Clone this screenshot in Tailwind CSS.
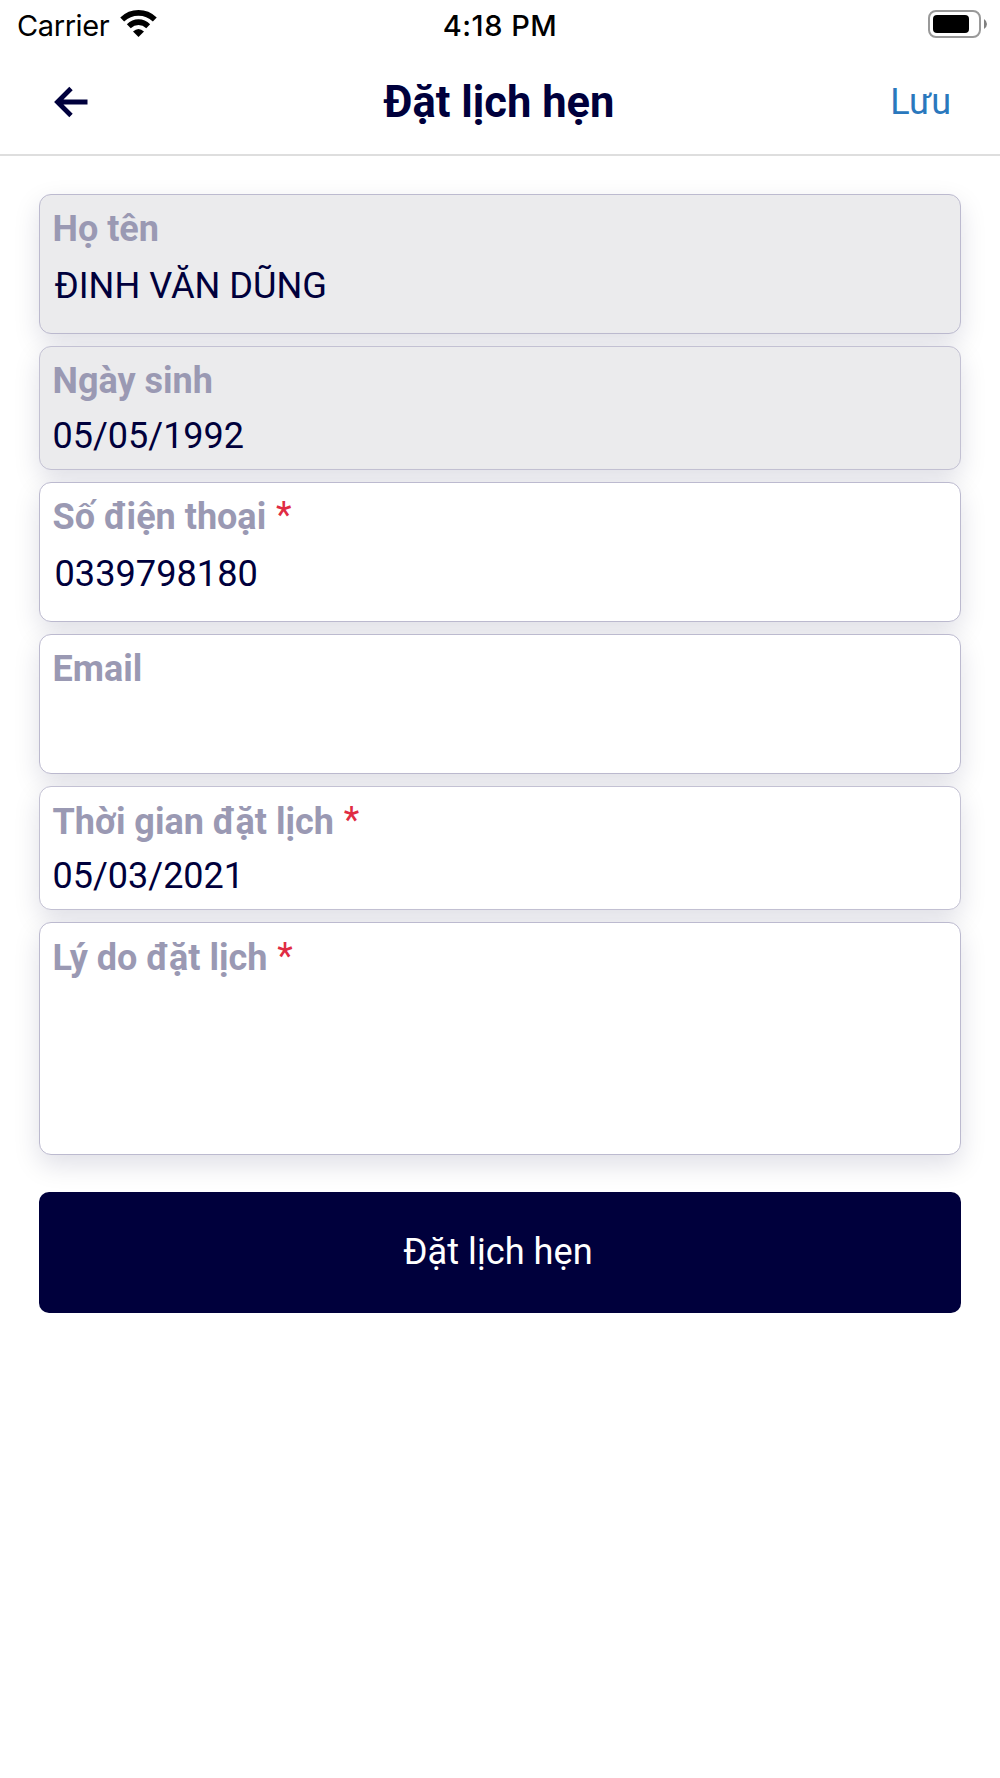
<!DOCTYPE html>
<html lang="vi">
<head>
    <meta charset="UTF-8">
    <meta name="viewport" content="width=device-width, initial-scale=1.0">
    <title>Đặt lịch hẹn</title>
    <script src="https://cdn.jsdelivr.net/npm/@tailwindcss/browser@4"></script>
</head>
<body class="bg-white min-h-screen font-[Roboto,sans-serif] text-[#00003c]">
    <!-- Status bar -->
    <div class="grid grid-cols-[1fr_auto_1fr] items-center h-[50px] pl-[17px] pr-[13px] font-[Inter,sans-serif] text-[29px] leading-none text-black">
        <div class="flex items-center gap-[9px]">
            <span class="w-[94px] tracking-[-0.4px] whitespace-nowrap">Carrier</span>
            <svg class="w-[37px] h-[28px] -mt-[2px]" viewBox="0 0 37 28" fill="none" stroke="#000">
                <path d="M2.200 9.500C11.500 .6 25.500 .6 34.800 9.500" stroke-width="5.600"/>
                <path d="M8.800 16.200C14.500 10.800 22.500 10.800 28.200 16.200" stroke-width="5.600"/>
                <path d="M13 21.400Q18.500 16.400 24 21.400L18.500 27Z" fill="#000" stroke="none"/>
            </svg>
        </div>
        <div class="pr-[4px] text-center font-medium tracking-[0.500px] whitespace-nowrap">4:18 PM</div>
        <div class="flex justify-end">
            <svg class="w-[59px] h-[28px] -mt-[2px]" viewBox="0 0 59 28">
                <rect x="1" y="1" width="51" height="26" rx="7" fill="none" stroke="#999" stroke-width="2"/>
                <rect x="5" y="5" width="36" height="18" rx="4" fill="#000"/>
                <path d="M56 9Q59 11 59 14T56 19Z" fill="#808080"/>
            </svg>
        </div>
    </div>

    <!-- Header -->
    <header class="grid grid-cols-[1fr_auto_1fr] items-center h-[106px] pl-[54px] pr-[49px] border-b-2 border-[#dedede]">
        <a href="#" aria-label="Quay lại">
            <svg class="w-[34px] h-[32px]" viewBox="0 0 34 32" fill="none" stroke="#00003c" stroke-width="4.800">
                <path d="M33.500 16H4M17 2.500L3.500 16L17 29.500"/>
            </svg>
        </a>
        <h1 class="pt-[2px] pr-[7px] text-[43.500px] leading-none font-bold">Đặt lịch hẹn</h1>
        <a href="#" class="text-right text-[36px] leading-none text-[#2a78bd]">Lưu</a>
    </header>

    <!-- Form -->
    <main class="px-[39px] pt-[37.500px] text-[36px]">
        <form class="flex flex-col gap-3">
            <div class="h-[140px] rounded-xl border border-[#bcbacf] bg-[#ebebed] px-[12.500px] pt-[13px] shadow-[0_10px_27px_rgba(0,0,60,0.13)]">
                <div class="font-bold leading-[42px] text-[#9a99b3]">Họ tên</div>
                <div class="pl-[2px] pt-[15px] text-[36.200px] leading-[42px]">ĐINH VĂN DŨNG</div>
            </div>
            <div class="h-[124px] rounded-xl border border-[#c3c1d3] bg-[#ebebed] px-[12.500px] pt-[13.500px] shadow-[0_10px_27px_rgba(0,0,60,0.13)]">
                <div class="font-bold leading-[42px] text-[#9a99b3]">Ngày sinh</div>
                <div class="pt-[12.500px] leading-[42px]">05/05/1992</div>
            </div>
            <div class="h-[140px] rounded-xl border border-[#bcbacf] bg-white px-[12.500px] pt-[13.500px] shadow-[0_10px_27px_rgba(0,0,60,0.13)]">
                <div class="font-bold leading-[42px] text-[#9a99b3]">Số điện thoại <span class="pl-px align-[2px] font-normal leading-none text-[#e02c43]">*</span></div>
                <div class="pl-[2px] pt-[14.500px] text-[36.200px] leading-[42px]">0339798180</div>
            </div>
            <div class="h-[140px] rounded-xl border border-[#bcbacf] bg-white px-[12.500px] pt-[13.500px] shadow-[0_10px_27px_rgba(0,0,60,0.13)]">
                <div class="font-bold leading-[42px] text-[#9a99b3]">Email</div>
            </div>
            <div class="h-[124px] rounded-xl border border-[#c3c1d3] bg-white px-[12.500px] pt-[14px] shadow-[0_10px_27px_rgba(0,0,60,0.13)]">
                <div class="font-bold leading-[42px] text-[#9a99b3]">Thời gian đặt lịch <span class="pl-px align-[2px] font-normal leading-none text-[#e02c43]">*</span></div>
                <div class="pt-[12.500px] leading-[42px]">05/03/2021</div>
            </div>
            <div class="h-[233px] rounded-xl border border-[#bcbacf] bg-white px-[12.500px] pt-[14px] shadow-[0_10px_27px_rgba(0,0,60,0.13)]">
                <div class="font-bold leading-[42px] text-[#9a99b3]">Lý do đặt lịch <span class="pl-px align-[2px] font-normal leading-none text-[#e02c43]">*</span></div>
            </div>
            <button type="button" class="mt-[25px] h-[121px] rounded-[10px] bg-[#00003c] pr-1 text-[36.200px] text-white">Đặt lịch hẹn</button>
        </form>
    </main>
</body>
</html>
